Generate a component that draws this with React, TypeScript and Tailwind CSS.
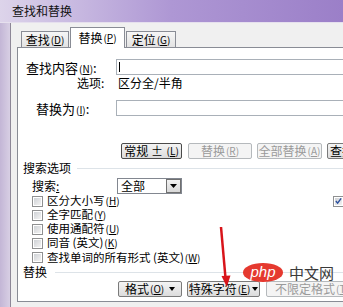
import React from "react";

const M = ({ c }: { c: string }) => (
  <span className="ml-[1px] text-[10px] leading-none">
    (<span className="underline">{c}</span>)
  </span>
);

function Btn({
  cls,
  children,
  disabled,
  strong,
}: {
  cls: string;
  children: React.ReactNode;
  disabled?: boolean;
  strong?: boolean;
}) {
  const base =
    "h-[16px] shrink-0 flex items-center justify-center rounded-[2px] border leading-none whitespace-nowrap ";
  const look = disabled
    ? "border-[#b5b9bc] bg-[#f4f4f4] text-[#9a9a9a]"
    : strong
    ? "border-[#4a4a4a] bg-gradient-to-b from-[#f4f4f4] to-[#dcdcdc] text-black"
    : "border-[#7a7a7a] bg-gradient-to-b from-[#f4f4f4] to-[#dcdcdc] text-black";
  return <div className={base + look + " " + cls}>{children}</div>;
}

function Check({ checked }: { checked?: boolean }) {
  return (
    <div className="w-[11px] h-[11px] shrink-0 border border-[#8f9091] bg-white p-[1px]">
      <div className="w-full h-full bg-gradient-to-br from-[#cfd2d6] to-[#f3f3f3] flex items-center justify-center">
        {checked && (
          <svg width="8" height="8" viewBox="0 0 8 8">
            <path d="M1 4 L3 6.5 L7 1" stroke="#2a4f9e" strokeWidth="1.6" fill="none" />
          </svg>
        )}
      </div>
    </div>
  );
}

function CheckRow({ h, label, right }: { h: string; label: React.ReactNode; right?: boolean }) {
  return (
    <div className={"flex items-center " + h}>
      <div className="w-[315px] flex items-center pl-[14px]">
        <Check />
        <span className="ml-[4px] leading-none whitespace-nowrap text-[11.5px]">{label}</span>
      </div>
      {right && <Check checked />}
    </div>
  );
}

export default function App() {
  return (
    <div
      className="relative w-[343px] h-[307px] overflow-hidden bg-[#c6b9d8] text-[12px] text-black"
      style={{ fontFamily: "'Noto Sans CJK SC', 'Noto Sans', sans-serif" }}
    >
      {/* title bar */}
      <div className="h-[23px] flex items-center pl-[12px] bg-gradient-to-r from-[#ddd4ea] via-[#ae97d4] to-[#9b7fc8] border-b border-[#e6e0ee]">
        <span className="text-[12px] leading-none text-[#111]">查找和替换</span>
      </div>
      <div className="flex h-[284px]">
        {/* left frame */}
        <div className="w-[11px] shrink-0 bg-gradient-to-r from-[#c3b6d6] to-[#d8cfe4] border-r border-[#8d8797]" />
        {/* client area */}
        <div className="flex-1 bg-[#f0f0f0] pl-[6px] pt-[4px] overflow-hidden">
          {/* tabs */}
          <div className="flex items-end h-[20px] pl-[4px]">
            <div className="w-[48px] h-[16px] border border-b-0 border-[#898c95] bg-gradient-to-b from-[#f6f6f6] to-[#e3e3e3] flex items-center justify-center leading-none whitespace-nowrap">
              查找<M c="D" />
            </div>
            <div className="relative z-10 -mb-px ml-[1px] w-[55px] h-[21px] border border-b-0 border-[#898c95] bg-white flex items-center justify-center leading-none whitespace-nowrap">
              替换<M c="P" />
            </div>
            <div className="ml-[1px] w-[50px] h-[16px] border border-b-0 border-[#898c95] bg-gradient-to-b from-[#f6f6f6] to-[#e3e3e3] flex items-center justify-center leading-none whitespace-nowrap">
              定位<M c="G" />
            </div>
          </div>
          {/* panel */}
          <div className="w-[340px] h-[255px] border border-[#898c95] bg-white">
            {/* find row */}
            <div className="mt-[11px] h-[16px] flex items-center">
              <div className="w-[98px] pl-[8px] leading-none whitespace-nowrap text-[13px]">
                查找内容<M c="N" />:
              </div>
              <div className="w-[240px] h-[16px] border border-[#a9b0b8] flex items-center pl-[2px]">
                <div className="w-px h-[10px] bg-black" />
              </div>
            </div>
            <div className="h-[16px] flex items-center">
              <div className="w-[100px] pl-[59px] leading-none whitespace-nowrap">选项:</div>
              <span className="leading-none whitespace-nowrap">区分全/半角</span>
            </div>
            {/* replace row */}
            <div className="mt-[9px] h-[16px] flex items-center">
              <div className="w-[98px] pl-[18px] leading-none whitespace-nowrap text-[13px]">
                替换为<M c="I" />:
              </div>
              <div className="w-[240px] h-[16px] border border-[#a9b0b8]" />
            </div>
            {/* buttons */}
            <div className="mt-[27px] flex">
              <Btn cls="ml-[103px] w-[61px]" strong>
                常规&nbsp;±&nbsp;<M c="L" />
              </Btn>
              <Btn cls="ml-[6px] w-[64px]" disabled>
                替换<M c="R" />
              </Btn>
              <Btn cls="ml-[5px] w-[65px]" disabled>
                全部替换<M c="A" />
              </Btn>
              <Btn cls="ml-[5px] w-[80px] justify-start pl-[2px]">
                查找下一处<M c="F" />
              </Btn>
            </div>
            {/* search options group */}
            <div className="mt-[2px] h-[14px] flex items-center pl-[5px]">
              <span className="leading-none whitespace-nowrap">搜索选项</span>
              <div className="ml-[6px] flex-1 h-px bg-[#dde3e8]" />
            </div>
            <div className="mt-[3px] h-[16px] flex items-center">
              <div className="w-[99px] pl-[14px] leading-none whitespace-nowrap">
                搜索<span className="underline">:</span>
              </div>
              <div className="w-[65px] h-[16px] border border-[#828790] flex items-center">
                <span className="pl-[3px] flex-1 leading-none">全部</span>
                <div className="w-[15px] h-[14px] border border-[#707070] bg-gradient-to-b from-[#f2f2f2] to-[#d8d8d8] flex items-center justify-center">
                  <svg width="7" height="4" viewBox="0 0 7 4">
                    <path d="M0 0 H7 L3.5 4 Z" fill="#000" />
                  </svg>
                </div>
              </div>
            </div>
            <CheckRow h="h-[14px]" label={<>区分大小写<M c="H" /></>} right />
            <CheckRow h="h-[14px]" label={<>全字匹配<M c="Y" /></>} />
            <CheckRow h="h-[14px]" label={<>使用通配符<M c="U" /></>} />
            <CheckRow h="h-[14px]" label={<>同音 (英文)<M c="K" /></>} />
            <CheckRow h="h-[15px]" label={<>查找单词的所有形式 (英文)<M c="W" /></>} />
            {/* replace group */}
            <div className="h-[14px] flex items-center pl-[5px]">
              <span className="leading-none whitespace-nowrap">替换</span>
              <div className="ml-[8px] flex-1 h-px bg-[#dde3e8]" />
            </div>
            <div className="mt-[2px] flex">
              <Btn cls="ml-[100px] w-[64px]">
                格式<M c="O" />&nbsp;
                <svg width="6" height="4" viewBox="0 0 6 4" className="ml-[2px]">
                  <path d="M0 0 H6 L3 4 Z" fill="#000" />
                </svg>
              </Btn>
              <Btn cls="ml-[5px] w-[73px]">
                特殊字符<M c="E" />
                <svg width="6" height="4" viewBox="0 0 6 4" className="ml-[2px]">
                  <path d="M0 0 H6 L3 4 Z" fill="#000" />
                </svg>
              </Btn>
              <Btn cls="ml-[6px] w-[85px] justify-start pl-[8px]" disabled>
                不限定格式<M c="T" />
              </Btn>
            </div>
          </div>
        </div>
      </div>

      {/* watermark */}
      <div className="absolute left-[243px] top-[263px] flex items-center pointer-events-none">
        <div className="w-[40px] h-[19px] rounded-[50%] bg-[#e5392f] flex items-center justify-center">
          <span
            className="text-white italic text-[15px] leading-none -mt-[2px]"
            style={{ fontFamily: "'Liberation Sans', Arial, sans-serif" }}
          >
            php
          </span>
        </div>
        <span className="ml-[6px] text-[15px] leading-none text-[#3a3a3a]">中文网</span>
      </div>

      {/* red arrow */}
      <svg className="absolute left-0 top-0 pointer-events-none" width="343" height="307">
        <line x1="221" y1="227" x2="225.5" y2="278" stroke="#d8141a" strokeWidth="2.5" />
        <path d="M221.5 276 L230.5 275.5 L226.8 287 Z" fill="#d8141a" />
      </svg>
    </div>
  );
}
